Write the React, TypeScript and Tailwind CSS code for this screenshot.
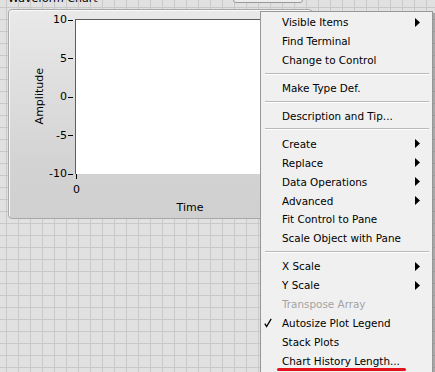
import React from "react";

type Item =
  | { kind: "sep" }
  | { kind: "item"; label: string; arrow?: boolean; disabled?: boolean; checked?: boolean };

const items: Item[] = [
  { kind: "item", label: "Visible Items", arrow: true },
  { kind: "item", label: "Find Terminal" },
  { kind: "item", label: "Change to Control" },
  { kind: "sep" },
  { kind: "item", label: "Make Type Def." },
  { kind: "sep" },
  { kind: "item", label: "Description and Tip..." },
  { kind: "sep" },
  { kind: "item", label: "Create", arrow: true },
  { kind: "item", label: "Replace", arrow: true },
  { kind: "item", label: "Data Operations", arrow: true },
  { kind: "item", label: "Advanced", arrow: true },
  { kind: "item", label: "Fit Control to Pane" },
  { kind: "item", label: "Scale Object with Pane" },
  { kind: "sep" },
  { kind: "item", label: "X Scale", arrow: true },
  { kind: "item", label: "Y Scale", arrow: true },
  { kind: "item", label: "Transpose Array", disabled: true },
  { kind: "item", label: "Autosize Plot Legend", checked: true },
  { kind: "item", label: "Stack Plots" },
  { kind: "item", label: "Chart History Length..." },
];

const yTicks = ["10", "5", "0", "-5", "-10"];

export default function App() {
  return (
    <div
      className="relative w-[435px] h-[372px] overflow-hidden bg-[#e1e1e1] bg-[linear-gradient(to_right,#c9c9c9_1px,transparent_1px),linear-gradient(to_bottom,#c9c9c9_1px,transparent_1px)] bg-size-[12px_12px] bg-position-[6px_7px] text-black"
      style={{ fontFamily: '"DejaVu Sans", Verdana, sans-serif' }}
    >
      {/* neighbouring control on the canvas, mostly off-screen */}
      <div className="absolute left-[233px] top-[-12px] w-[70px] h-[15px] rounded-[3px] border border-[#9a9a9a] bg-[#ececec]" />

      {/* chart label */}
      <div className="-mt-[7px] ml-[8px] h-[12px] text-[11px] leading-[12px]">Waveform Chart</div>

      {/* chart panel */}
      <div className="mt-[4px] ml-[8px] w-[305px] h-[210px] rounded-[4px] border border-[#a8a8a8] bg-[linear-gradient(to_bottom,#e9e9e9,#d3d3d3_75%,#d0d0d0)] shadow-[inset_1px_1px_0_#f8f8f8] pt-[9px]">
        <div className="flex h-[155px]">
          {/* y axis */}
          <div className="flex w-[66px] h-full">
            <div className="w-[37px] h-full flex items-center justify-end">
              <span className="text-[11px] leading-[13px] [writing-mode:vertical-rl] rotate-180">Amplitude</span>
            </div>
            <div className="w-[29px] h-full pt-[1px] flex flex-col justify-between">
              {yTicks.map((t) => (
                <div key={t} className="h-0 flex items-center justify-end pr-[2px] gap-[1px]">
                  <span className="text-[11px] leading-[12px]">{t}</span>
                  <span className="w-[5px] h-[1px] bg-black" />
                </div>
              ))}
            </div>
          </div>
          {/* plot area */}
          <div className="flex-1 mr-[7px] h-full border-l border-t border-[#5e5e5e] bg-white" />
        </div>
        {/* x axis */}
        <div className="flex">
          <div className="w-[66px]" />
          <div className="flex-1 mr-[7px] flex flex-col">
            <div className="ml-[1px] w-[1px] h-[5px] bg-black" />
            <div className="mt-[5px] -ml-[2px] text-[11px] leading-[12px]">0</div>
            <div className="mt-[6px] text-center text-[11px] leading-[12px]">Time</div>
          </div>
        </div>
      </div>

      {/* context menu */}
      <div className="absolute left-[260px] top-[11px] w-[173px] h-[380px] border border-[#979797] bg-[#f0f0f0] shadow-[2px_2px_1px_rgba(0,0,0,0.25)] text-[10.4px]">
        <div className="pt-[1px]">
          {items.map((it, i) =>
            it.kind === "sep" ? (
              <div key={i} className="h-[9px] pt-[3px] pl-[4px] pr-[3px]">
                <div className="h-[1px] bg-[#b9b9b9]" />
                <div className="h-[1px] bg-white" />
              </div>
            ) : (
              <div
                key={i}
                className={`h-[18.9px] flex items-center pr-[12px] ${it.disabled ? "text-[#a3a3a3]" : "text-black"}`}
              >
                <div className="w-[21px] h-full flex items-center pl-[3px]">
                  {it.checked && (
                    <svg width="8" height="10" viewBox="0 0 8 10">
                      <path d="M0.8 5.6 L2.6 8.6 L7.2 0.8" fill="none" stroke="#000" strokeWidth="1.3" />
                    </svg>
                  )}
                </div>
                <span className="flex-1 leading-[12px] whitespace-nowrap">{it.label}</span>
                {it.arrow && (
                  <svg width="5" height="9" viewBox="0 0 5 9">
                    <path d="M0 0 L5 4.5 L0 9 Z" fill="#000" />
                  </svg>
                )}
              </div>
            )
          )}
        </div>
      </div>

      {/* red underline annotation */}
      <div className="absolute left-[277px] top-[368px] w-[129px] h-[3px] rounded-full bg-[#e4121c]" />
    </div>
  );
}
